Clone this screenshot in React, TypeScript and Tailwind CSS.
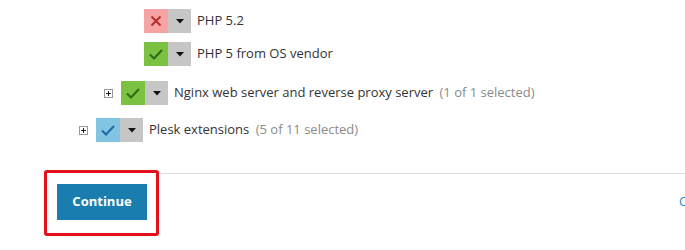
import type { ReactNode } from 'react';

type State = 'off' | 'on' | 'partial';

function Caret() {
  return (
    <svg width="8" height="5" viewBox="0 0 8 5">
      <path d="M0 0 H8 L4 4.5 Z" fill="#111" />
    </svg>
  );
}

function Mark({ state }: { state: State }) {
  if (state === 'off') {
    return (
      <svg width="12" height="12" viewBox="0 0 12 12">
        <path d="M1.5 1.5 L10.5 10.5 M10.5 1.5 L1.5 10.5" stroke="#b8302c" strokeWidth="2" />
      </svg>
    );
  }
  const color = state === 'on' ? '#2f6b16' : '#1e6aa8';
  return (
    <svg width="14" height="11" viewBox="0 0 14 11">
      <path d="M1 5.5 L5 9.5 L13 1" stroke={color} strokeWidth="2" fill="none" />
    </svg>
  );
}

function Toggle({ state }: { state: State }) {
  const bg = state === 'off' ? 'bg-[#f5a3a3]' : state === 'on' ? 'bg-[#7cc242]' : 'bg-[#82c5e3]';
  return (
    <div className="flex h-6 shrink-0">
      <div className={`flex w-6 items-center justify-center ${bg}`}>
        <Mark state={state} />
      </div>
      <div className="flex w-[23px] items-center justify-center bg-[#c6c6c6]">
        <Caret />
      </div>
    </div>
  );
}

function Expander() {
  return (
    <div className="mr-2 flex h-[9px] w-[9px] items-center justify-center border border-[#9a9a9a] bg-white">
      <svg width="5" height="5" viewBox="0 0 5 5">
        <path d="M0 2.5 H5 M2.5 0 V5" stroke="#222" strokeWidth="1" />
      </svg>
    </div>
  );
}

function Row({ indent, state, expander, children, className }: { indent: string; state: State; expander?: boolean; children: ReactNode; className: string }) {
  return (
    <div className={`flex items-center ${indent} ${className}`}>
      {expander && <Expander />}
      <Toggle state={state} />
      <span className="ml-[6px] whitespace-nowrap">{children}</span>
    </div>
  );
}

export default function App() {
  return (
    <div className="relative h-[250px] w-[685px] overflow-hidden bg-white text-[13px] text-[#333] [font-family:'Open_Sans',sans-serif]">
      <div className="pt-[9px]">
        <Row indent="pl-[144px]" state="off" className="">
          PHP 5.2
        </Row>
        <Row indent="pl-[144px]" state="on" className="mt-[9px]">
          PHP 5 from OS vendor
        </Row>
        <Row indent="pl-[104px]" state="on" expander className="mt-[15px]">
          Nginx web server and reverse proxy server <span className="ml-[3px] text-[#8a8a8a]">(1 of 1 selected)</span>
        </Row>
        <Row indent="pl-[79px]" state="partial" expander className="mt-[13px]">
          Plesk extensions <span className="ml-[3px] text-[#8a8a8a]">(5 of 11 selected)</span>
        </Row>
      </div>

      <div className="ml-[44px] mt-[31px] border-t border-[#dcdcdc] pt-[10px]">
        <div className="flex items-center">
          <button className="relative z-10 ml-[13px] h-9 w-[90px] shrink-0 bg-[#1a7db0] text-[13px] font-bold text-white">
            Continue
          </button>
          <span className="ml-[532px] shrink-0 whitespace-nowrap text-[13px] text-[#2c8ad6]">Cancel</span>
        </div>
      </div>

      <div className="absolute left-[44px] top-[170px] h-[66px] w-[115px] rounded-[3px] border-[3px] border-[#e3101a] bg-white" />
    </div>
  );
}
